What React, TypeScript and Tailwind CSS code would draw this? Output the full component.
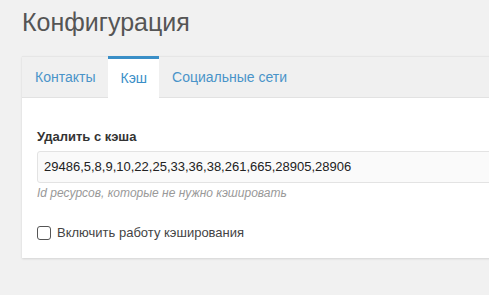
export default function App() {
  const tabs = ["Контакты", "Кэш", "Социальные сети"];
  const active = 1;

  return (
    <div
      className="min-h-[295px] w-[489px] overflow-hidden bg-[#f1f1f1] pl-[22px]"
      style={{ fontFamily: '"Liberation Sans", Arial, sans-serif' }}
    >
      <h1 className="pt-[7px] text-[25px] leading-[30px] text-[#555]">Конфигурация</h1>

      <div className="mt-[19px] w-[520px] bg-white shadow-[0_1px_2px_rgba(0,0,0,0.12)]">
        <div className="flex h-[42px] border-b border-[#e2e2e2] border-t border-t-[#e6e6e6] bg-[#f0f0f0]">
          {tabs.map((t, i) => (
            <div
              key={t}
              className={
                i === active
                  ? "-mb-px -mt-px flex h-[43px] items-center border-t-[3px] border-[#3a8fc7] bg-white px-[12px] pb-[2px] text-[14px] text-[#3a8fc7]"
                  : "flex items-center px-[13px] pt-px text-[14px] text-[#4a94c9]"
              }
            >
              {t}
            </div>
          ))}
        </div>

        <div className="px-[15px] pb-[15px] pt-[31px]">
          <label className="block text-[13px] font-bold leading-[15px] text-[#333]">Удалить с кэша</label>
          <div className="mt-[7px] flex h-[32px] items-center rounded-[3px] border border-[#e3e3e3] bg-[#fafafa] px-[6px] text-[13px] text-[#222]">
            29486,5,8,9,10,22,25,33,36,38,261,665,28905,28906
          </div>
          <p className="mt-[3px] text-[12px] italic leading-[14px] text-[#999]">
            Id ресурсов, которые не нужно кэшировать
          </p>

          <label className="mt-[23px] flex items-center gap-[6px] text-[13px] text-[#444]">
            <span className="block h-[14px] w-[14px] rounded-[3px] border-[1.5px] border-[#555] bg-white" />
            Включить работу кэширования
          </label>
        </div>
      </div>
    </div>
  );
}
